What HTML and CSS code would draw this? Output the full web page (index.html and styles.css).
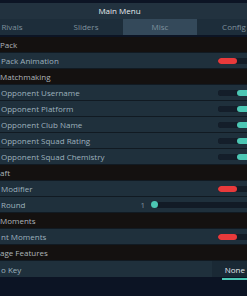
FILE: index.html
```html
<!DOCTYPE html>
<html lang="en">
<head>
  <meta charset="UTF-8" />
  <meta name="viewport" content="width=device-width, initial-scale=1.0"/>
  <title>Main Menu</title>
  <link rel="stylesheet" href="styles.css">
</head>
<body>

  <main class="menu">
    <div class="titulo">Main Menu</div>

    <nav class="abas">
      <span class="aba">Rivals</span>
      <span class="aba">Sliders</span>
      <span class="aba ativa">Misc</span>
      <span class="aba">Config</span>
    </nav>

    <div class="lista">
      <div class="secao">Pack</div>
      <div class="linha">
        <span>Pack Animation</span>
        <span class="toggle off"><i></i><i></i></span>
      </div>

      <div class="secao">Matchmaking</div>
      <div class="linha">
        <span>Opponent Username</span>
        <span class="toggle on"><i></i><i></i></span>
      </div>
      <div class="linha">
        <span>Opponent Platform</span>
        <span class="toggle on"><i></i><i></i></span>
      </div>
      <div class="linha">
        <span>Opponent Club Name</span>
        <span class="toggle on"><i></i><i></i></span>
      </div>
      <div class="linha">
        <span>Opponent Squad Rating</span>
        <span class="toggle on"><i></i><i></i></span>
      </div>
      <div class="linha">
        <span>Opponent Squad Chemistry</span>
        <span class="toggle on"><i></i><i></i></span>
      </div>

      <div class="secao">aft</div>
      <div class="linha">
        <span>Modifier</span>
        <span class="toggle off"><i></i><i></i></span>
      </div>
      <div class="linha">
        <span>Round</span>
        <span class="slider">
          <span class="valor">1</span>
          <span class="trilho"><i class="ponto"></i></span>
        </span>
      </div>

      <div class="secao">Moments</div>
      <div class="linha">
        <span>nt Moments</span>
        <span class="toggle off"><i></i><i></i></span>
      </div>

      <div class="secao">age Features</div>
      <div class="linha tecla">
        <span>o Key</span>
        <span class="campo">None</span>
      </div>
    </div>
    <div class="sublinhado"></div>
  </main>

</body>
</html>
```

FILE: styles.css
```css
* {
  box-sizing: border-box;
  font-family: "Open Sans", "Noto Sans", sans-serif;
}

body {
  background-color: #0c1424;
  margin: 0;
  width: 247px;
  height: 296px;
  overflow: hidden;
}

.menu {
  padding-top: 3px;
  overflow: hidden;
}

.titulo {
  height: 16px;
  background: #22323f;
  color: #e6ecef;
  font-size: 8px;
  line-height: 16px;
  text-align: center;
  padding-right: 8px;
}

.abas {
  display: grid;
  grid-template-columns: repeat(4, 74px);
  margin-left: -25px;
  height: 16px;
  background: #1d2d3a;
}

.aba {
  color: #7f919d;
  font-size: 8px;
  line-height: 16px;
  text-align: center;
}

.aba.ativa {
  background: #34495a;
}

.lista {
  margin-top: 2px;
  display: grid;
  gap: 1px;
  background: #111a22;
}

.linha,
.secao {
  height: 15px;
  display: flex;
  align-items: center;
  font-size: 8px;
  white-space: nowrap;
  overflow: hidden;
}

.secao {
  background: #141110;
  color: #aeb5b9;
}

.linha {
  background: #1f303c;
  color: #9eb0bc;
  justify-content: space-between;
  padding-left: 1px;
}

.toggle {
  display: flex;
  width: 29px;
  height: 6px;
  border-radius: 3px 0 0 3px;
  overflow: hidden;
  background: #131c26;
}

.toggle i {
  display: block;
  height: 6px;
}

.toggle i:first-child {
  width: 19px;
  border-radius: 3px;
}

.toggle i:last-child {
  flex: 1;
  border-radius: 3px 0 0 3px;
}

.toggle.off i:first-child {
  background: #e83a3b;
}

.toggle.on i:first-child {
  background: #141e2a;
}

.toggle.on i:last-child {
  background: #4cc7b4;
}

.slider {
  display: flex;
  align-items: center;
  gap: 6px;
}

.valor {
  color: #7f8f99;
  font-size: 8px;
}

.trilho {
  display: flex;
  align-items: center;
  width: 96px;
  height: 6px;
  background: #121b26;
  border-radius: 3px 0 0 3px;
}

.ponto {
  display: block;
  width: 7px;
  height: 7px;
  border-radius: 50%;
  background: #4cc7b4;
}

.tecla {
  height: 16px;
  align-items: stretch;
}

.tecla span:first-child {
  align-self: center;
}

.campo {
  width: 35px;
  background: #1a2935;
  color: #e2e8ec;
  font-size: 8px;
  line-height: 18px;
  text-align: right;
  padding-right: 2px;
}

.sublinhado {
  height: 2px;
  width: 25px;
  margin: 1px 0 0 222px;
  background: #4cc7b4;
}
```
